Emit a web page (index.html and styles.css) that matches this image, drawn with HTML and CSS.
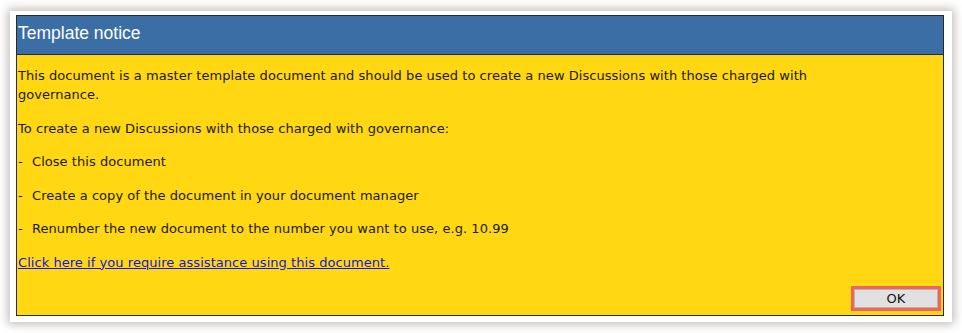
FILE: index.html
```html
<!DOCTYPE html>
<html lang="en">
<head>
  <meta charset="UTF-8" />
  <title>Template notice</title>
  <link rel="stylesheet" href="styles.css">
</head>
<body>
  <div class="frame">
    <div class="notice">
      <!-- Title Bar -->
      <div class="notice-header">Template notice</div>

      <!-- Message -->
      <div class="notice-body">
        <p class="wide">This document is a master template document and should be used to create a new Discussions with those charged with governance.</p>
        <p>To create a new Discussions with those charged with governance:</p>
        <p><span class="dash">-</span>Close this document</p>
        <p><span class="dash">-</span>Create a copy of the document in your document manager</p>
        <p><span class="dash">-</span>Renumber the new document to the number you want to use, e.g. 10.99</p>
        <p><a class="help-link" href="#">Click here if you require assistance using this document.</a></p>

        <div class="actions">
          <button class="ok-btn">OK</button>
        </div>
      </div>
    </div>
  </div>
</body>
</html>
```

FILE: styles.css
```css
/* Basic Reset */
* {
  margin: 0;
  padding: 0;
  box-sizing: border-box;
}

body {
  background: #fff;
  padding: 11px 10px 11px 10px;
  font-family: 'Liberation Sans', Arial, sans-serif;
}

/* White frame with soft shadow */
.frame {
  width: 942px;
  height: 311px;
  background: #fff;
  padding: 4px 8px 6px 6px;
  box-shadow: 0 0 9px 2px rgba(110, 100, 90, 0.45);
}

/* Dialog */
.notice {
  height: 100%;
  border: 1px solid #2b2b2b;
  background: #ffd713;
  display: flex;
  flex-direction: column;
}

.notice-header {
  height: 40px;
  background: #3b6ea5;
  border-bottom: 1px solid #1e2a3a;
  color: #fff;
  font-size: 17.5px;
  padding: 7px 1px 0;
}

.notice-body {
  flex: 1;
  display: flex;
  flex-direction: column;
  padding: 11px 2px 4px 1px;
  color: #1c1a05;
  font-family: 'DejaVu Sans', Tahoma, sans-serif;
  font-size: 13px;
  letter-spacing: 0.05px;
  line-height: 19px;
}
.notice-body p {
  margin-bottom: 14.5px;
}
.notice-body p.wide {
  max-width: 830px;
}

.dash {
  display: inline-block;
  width: 14px;
}

.help-link {
  color: #1515e0;
  text-decoration: underline;
}

/* Button row */
.actions {
  margin-top: auto;
  display: flex;
  justify-content: flex-end;
}
.ok-btn {
  width: 90px;
  height: 25px;
  border: 3px solid #f2645a;
  background: #e1e1e1;
  box-shadow: inset 0 0 0 1px #b4b4b4;
  font-family: 'DejaVu Sans', Tahoma, sans-serif;
  font-size: 13px;
  color: #111;
  cursor: pointer;
}
```
